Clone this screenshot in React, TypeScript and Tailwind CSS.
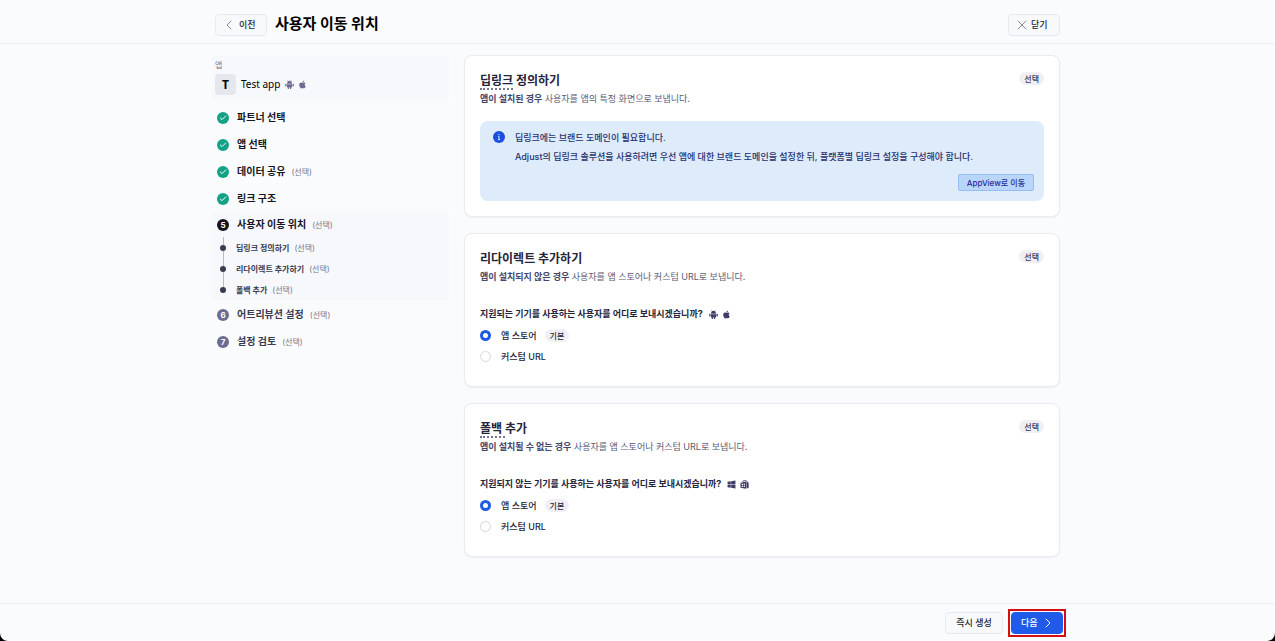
import React, { useState } from 'react';
import { Check, ChevronLeft, ChevronRight, X } from 'lucide-react';
import { FaApple, FaWindows } from 'react-icons/fa';

const steps = [
  { title: '파트너 선택', optional: false },
  { title: '앱 선택', optional: false },
  { title: '데이터 공유', optional: true },
  { title: '링크 구조', optional: false },
];

const subSteps = ['딥링크 정의하기', '리다이렉트 추가하기', '폴백 추가'];

const upcoming = [
  { number: 6, title: '어트리뷰션 설정' },
  { number: 7, title: '설정 검토' },
];

const Optional: React.FC = () => <span className="-ml-0.5 text-[8px] font-normal text-[#77778f]">(선택)</span>;

const AndroidIcon: React.FC = () => (
  <svg viewBox="0 0 18 18" className="size-[9px]" fill="currentColor" aria-hidden="true">
    <path d="M4 7.500C4 4 6 1.500 9 1.500S14 4 14 7.500z" />
    <path d="M4 8.500h10v5.200c0 .7-.6 1.300-1.300 1.300H5.300C4.600 15 4 14.400 4 13.700z" />
    <rect x="0.500" y="7.500" width="2.500" height="5.500" rx="1.200" />
    <rect x="15" y="7.500" width="2.500" height="5.500" rx="1.200" />
    <rect x="5.500" y="14" width="2.500" height="4" rx="1" />
    <rect x="10" y="14" width="2.500" height="4" rx="1" />
    <path d="M5 .5l1.500 2M13 .5l-1.500 2" stroke="currentColor" strokeWidth="1" />
  </svg>
);

const StoreIcon: React.FC = () => (
  <svg viewBox="0 0 18 18" className="size-[9px]" aria-hidden="true">
    <path d="M6 5V2.500C6 1.700 6.600 1.500 7.200 1.500h5c.9 0 1.300.5 1.300 1.200V5" stroke="currentColor" strokeWidth="1.8" fill="none" />
    <path d="M1 5.500L12 3.500v14L1 15.500z" fill="currentColor" />
    <path d="M12.800 4.500H16c.8 0 1.300.5 1.300 1.300v9.400c0 .8-.5 1.300-1.300 1.300h-3.200z" fill="currentColor" />
    <path d="M3.500 7.500h2.500v2.500H3.500zM7.500 7.500h2.500v2.500H7.500zM3.500 11.500h2.500V14H3.500zM7.500 11.500h2.500V14H7.500z" fill="#fff" />
  </svg>
);

const buttonBase = 'flex h-[22px] items-center rounded border text-[9px] font-medium';

const Sidebar: React.FC = () => (
  <aside className="w-[237px] shrink-0 pt-px">
    <div className="h-11 bg-[#f6f8fc] px-[3px] pt-1">
      <p className="text-[8px] leading-[10px] text-[#77778f]">앱</p>
      <div className="mt-1 flex items-center gap-[5px]">
        <span className="flex size-[21px] items-center justify-center rounded bg-[#e4e7ec] font-['Noto_Sans'] text-xs font-bold text-black">T</span>
        <span className="font-['Noto_Sans'] text-[10px] text-black">Test app</span>
        <span className="flex gap-1 text-[#6d6b91]">
          <AndroidIcon />
          <FaApple className="size-[9px]" />
        </span>
      </div>
    </div>

    <nav className="mt-1">
      <ol>
        {steps.map((step) => (
          <li key={step.title} className="flex h-[27px] items-center gap-2 px-[5px]">
            <span className="flex size-3 items-center justify-center rounded-full bg-[#13a286] text-white">
              <Check className="size-2" strokeWidth={3} />
            </span>
            <span className="text-[10px] font-bold text-[#15151f]">{step.title}</span>
            {step.optional && <Optional />}
          </li>
        ))}
        <li className="bg-[#f6f8fc] px-[5px] pb-px">
          <div className="flex h-[25px] items-center gap-2">
            <span className="flex size-3 items-center justify-center rounded-full bg-[#15151f] text-[8px] font-bold text-white">5</span>
            <span className="text-[10px] font-bold text-[#15151f]">사용자 이동 위치</span>
            <Optional />
          </div>
          <ol>
            {subSteps.map((title, i) => (
              <li key={title} className="flex h-[21px] items-center gap-[7px]">
                <span className="flex h-full w-3 flex-col items-center">
                  <span className="w-px flex-1 bg-[#b9b9c9]" />
                  <span className="size-1.5 rounded-full bg-[#3a3a50]" />
                  <span className={i === subSteps.length - 1 ? 'flex-1' : 'w-px flex-1 bg-[#b9b9c9]'} />
                </span>
                <span className="text-[8px] font-bold text-[#3a3a50]">{title}</span>
                <Optional />
              </li>
            ))}
          </ol>
        </li>
        {upcoming.map((step) => (
          <li key={step.number} className="flex h-[27px] items-center gap-2 px-[5px]">
            <span className="flex size-3 items-center justify-center rounded-full bg-[#6d6b91] text-[8px] font-bold text-white">{step.number}</span>
            <span className="text-[10px] font-bold text-[#3a3a50]">{step.title}</span>
            <Optional />
          </li>
        ))}
      </ol>
    </nav>
  </aside>
);

interface CardProps {
  title: React.ReactNode;
  condition: string;
  description: string;
  children: React.ReactNode;
}

const Card: React.FC<CardProps> = ({ title, condition, description, children }) => (
  <section className="rounded-lg border border-[#e9ebf0] bg-white px-[15px] pt-4 pb-[15px] shadow-xs">
    <div className="flex items-start justify-between">
      <div>
        <h2 className="text-xs leading-[18px] font-bold text-[#24243a]">{title}</h2>
        <p className="text-[9px] leading-[18px] text-[#5c5b78]">
          <span className="font-bold text-[#46456a]">{condition}</span> {description}
        </p>
      </div>
      <span className="flex h-[13px] items-center rounded-full bg-[#efeff4] px-[5px] text-[8px] font-medium text-[#3a3a50]">선택</span>
    </div>
    {children}
  </section>
);

interface DestinationProps {
  name: string;
  question: string;
  icons: React.ReactNode;
}

const Destination: React.FC<DestinationProps> = ({ name, question, icons }) => {
  const [value, setValue] = useState('store');
  const radio = 'size-[11px] appearance-none rounded-full border border-[#d5d7e0] bg-white checked:border-[3px] checked:border-[#1f5ae8]';

  return (
    <fieldset className="mt-[18px] pb-1">
      <legend className="flex h-[21px] items-center gap-1.5 pb-px text-[9px] font-bold text-[#24243a]">
        {question}
        <span className="flex gap-1 text-[#3f3d66]">{icons}</span>
      </legend>
      <label className="flex h-[21px] items-center text-[9px] font-medium text-[#24243a]">
        <input type="radio" name={name} className={radio} checked={value === 'store'} onChange={() => setValue('store')} />
        <span className="ml-2.5">앱 스토어</span>
        <span className="ml-2 flex h-[13px] items-center rounded-full bg-[#efeff4] px-[5px] text-[8px]">기본</span>
      </label>
      <label className="flex h-[21px] items-center text-[9px] font-medium text-[#24243a]">
        <input type="radio" name={name} className={radio} checked={value === 'custom'} onChange={() => setValue('custom')} />
        <span className="ml-2.5">커스텀 URL</span>
      </label>
    </fieldset>
  );
};

const Term: React.FC<{ children: React.ReactNode }> = ({ children }) => (
  <span className="border-b-2 border-dotted border-[#77778f]">{children}</span>
);

export default function App() {
  return (
    <div className="min-h-screen bg-black font-['Inter','Noto_Sans_CJK_KR',sans-serif]">
      <div className="flex min-h-screen flex-col rounded-b-lg bg-[#fafbfd]">
        <header className="border-b border-[#eceef2]">
          <div className="mx-auto flex h-[43px] max-w-[851px] items-center px-[3px] pt-1.5">
            <button className={`${buttonBase} w-[52px] gap-0.5 border-[#e8eaef] bg-[#f8f9fb] pl-[5px] text-[#24243a]`}>
              <ChevronLeft className="size-4 text-[#8a8a9c]" strokeWidth={1.5} />
              이전
            </button>
            <h1 className="ml-2 text-[15px] font-bold text-black">사용자 이동 위치</h1>
            <button className={`${buttonBase} ml-auto w-[52px] gap-px border-[#e8eaef] bg-[#f8f9fb] pl-[5px] text-[#24243a]`}>
              <X className="size-4 text-[#8a8a9c]" strokeWidth={1.5} />
              닫기
            </button>
          </div>
        </header>

        <main className="mx-auto flex w-full max-w-[851px] flex-1 gap-[15px] pt-[11px] pr-[3px] pb-4">
          <Sidebar />
          <div className="flex min-w-0 flex-1 flex-col gap-4">
            <Card title={<><Term>딥링크</Term> 정의하기</>} condition="앱이 설치된 경우" description="사용자를 앱의 특정 화면으로 보냅니다.">
              <div className="mt-[13px] flex gap-2.5 rounded-lg bg-[#deebfb] pt-[7px] pr-2.5 pb-2.5 pl-[13px] text-[9px] font-medium text-[#27306b]">
                <svg viewBox="0 0 12 12" className="mt-[3px] size-3 shrink-0" aria-hidden="true">
                  <circle cx="6" cy="6" r="6" fill="#1b4fe0" />
                  <path d="M6 3v1.200M5.200 5.500H6V8.500M5 8.600h2" stroke="#dbe8ff" strokeWidth="1" fill="none" />
                </svg>
                <div className="flex flex-1 flex-col">
                  <p className="leading-[19px]">딥링크에는 브랜드 도메인이 필요합니다.</p>
                  <p className="leading-[19px]">Adjust의 딥링크 솔루션을 사용하려면 우선 앱에 대한 브랜드 도메인을 설정한 뒤, 플랫폼별 딥링크 설정을 구성해야 합니다.</p>
                  <button className="mt-2 h-[17px] self-end rounded-xs border border-[#94bdf3] bg-[#b9d5f9] px-2 text-[8px] font-medium text-[#1e2f9c]">AppView로 이동</button>
                </div>
              </div>
            </Card>

            <Card title="리다이렉트 추가하기" condition="앱이 설치되지 않은 경우" description="사용자를 앱 스토어나 커스텀 URL로 보냅니다.">
              <Destination
                name="redirect"
                question="지원되는 기기를 사용하는 사용자를 어디로 보내시겠습니까?"
                icons={<><AndroidIcon /><FaApple className="size-[9px]" /></>}
              />
            </Card>

            <Card title={<><Term>폴백 </Term>추가</>} condition="앱이 설치될 수 없는 경우" description="사용자를 앱 스토어나 커스텀 URL로 보냅니다.">
              <Destination
                name="fallback"
                question="지원되지 않는 기기를 사용하는 사용자를 어디로 보내시겠습니까?"
                icons={<><FaWindows className="size-[9px]" /><StoreIcon /></>}
              />
            </Card>
          </div>
        </main>

        <footer className="border-t border-[#eceef2]">
          <div className="mx-auto flex max-w-[857px] items-center justify-end gap-[5px] pt-[5px] pb-1">
            <button className={`${buttonBase} w-[58px] justify-center border-[#e8eaef] bg-[#f8f9fb] text-[#24243a]`}>즉시 생성</button>
            <div className="border-2 border-[#d40f14] p-px">
              <button className={`${buttonBase} w-[52px] gap-0.5 border-[#1f5ae8] bg-[#1f5ae8] pl-[9px] text-white`}>
                다음
                <ChevronRight className="size-4" strokeWidth={1.5} />
              </button>
            </div>
          </div>
        </footer>
      </div>
    </div>
  );
}
